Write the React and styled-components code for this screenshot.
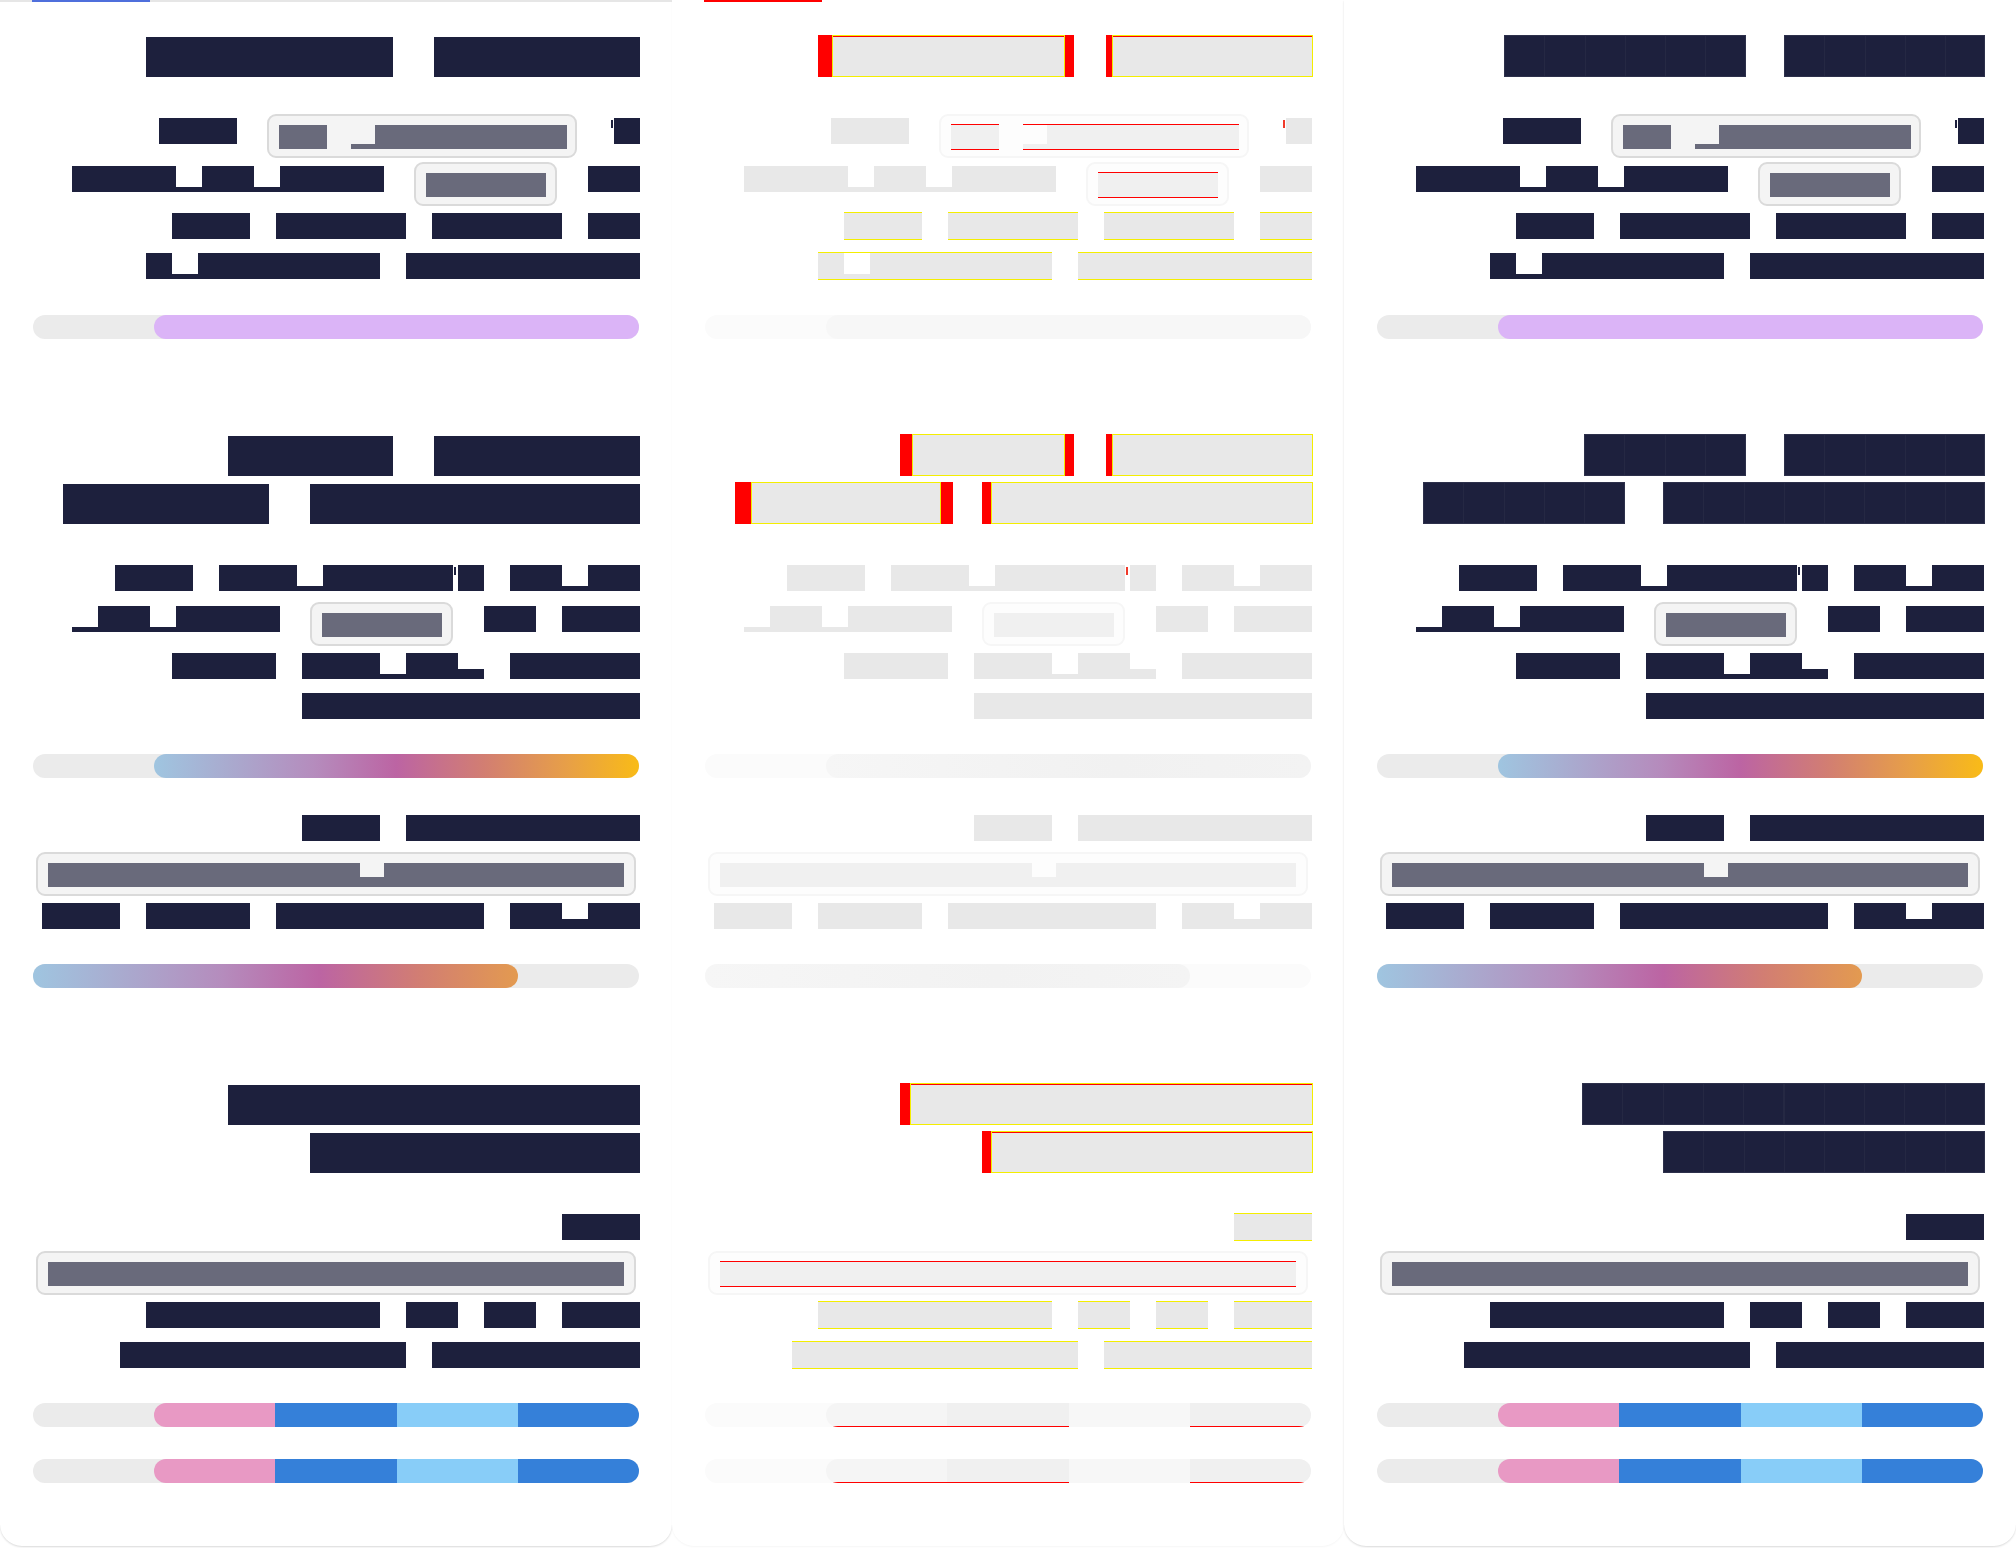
import React from 'react';
import styled, { createGlobalStyle, ThemeProvider, css, useTheme } from 'styled-components';

const YELLOW = '#f4ee00';
const RED = '#ff0000';

const GlobalStyle = createGlobalStyle`
  html, body {
    margin: 0;
    padding: 0;
    background: #fff;
  }
  body {
    font-family: "Liberation Sans", Arial, sans-serif;
  }
`;

// title metrics of the two renders being compared
const metrics = {
    base: { cw: 41.2, sw: 41.2, right: 640 },
    alt: { cw: 40.3, sw: 38, right: 641 },
};

const base = {
    metric: 'base',
    ink: '#1d203d',
    field: '#f4f4f4',
    fieldLine: '#dadada',
    fieldInk: '#696a7b',
    tick: '#1d203d',
    track: '#ebebeb',
    lavender: '#dbb4f7',
    gradA: 'linear-gradient(90deg, #9fc5e0 0%, #a9abcf 15%, #b58cbd 33%, #bc64a3 50%, #d27e72 68%, #e79f48 85%, #f9bb17 100%)',
    gradB: 'linear-gradient(90deg, #9fc5e0 0%, #a9abcf 18%, #b58cbd 39%, #bc64a3 59%, #d27e72 80%, #e39a50 100%)',
    segs: ['#e899c4', '#3580d9', '#88cdf8', '#3580d9'],
    titleH: 40,
    grid: false,
    tab: '#e6e6e6',
    tabActive: '#4f6fdc',
    shadow: '0 1px 2px rgba(0,0,0,0.15)',
};

const alt = {
    ...base,
    metric: 'alt',
    titleH: 42,
    grid: true,
    tab: 'transparent',
    tabActive: 'transparent',
};

const diff = {
    ...base,
    diff: true,
    marks: true,
    ink: '#e8e8e8',
    field: '#fdfdfd',
    fieldLine: '#f6f6f6',
    fieldInk: '#f0f0f0',
    tick: '#f03a2a',
    track: '#fbfbfb',
    lavender: '#f7f7f7',
    gradA: 'linear-gradient(90deg, #f6f6f6, #f1f1f1 60%, #f3f3f3)',
    gradB: 'linear-gradient(90deg, #f6f6f6, #f2f2f2 60%, #f4f4f4)',
    segs: ['#f5f5f5', '#f0f0f0', '#f7f7f7', '#f0f0f0'],
    tab: 'transparent',
    tabActive: RED,
    shadow: '0 1px 2px rgba(0,0,0,0.04)',
};

const content = [
    { k: 'title', p: 'xxxxxx xxxxx', mt: 33, top: true },
    { k: 'line', mt: 37, h: 48, items: [
        { t: 'text', p: 'xxx' },
        { t: 'field', w: 310, p: 'xx _xxxxxxxx', gap: 30, m: 'r' },
        { t: 'tick', gap: 34 },
        { t: 'text', p: 'x', gap: 1 },
    ] },
    { k: 'line', h: 47, items: [
        { t: 'text', p: 'xxxx_xx_xxxx' },
        { t: 'field', w: 143, p: 'xxxxx', gap: 30, m: 'r' },
        { t: 'text', p: 'xx', gap: 31 },
    ] },
    { k: 'line', h: 40, items: [{ t: 'text', p: 'xxx xxxxx xxxxx xx', m: 'y' }] },
    { k: 'line', h: 40, items: [{ t: 'text', p: 'x_xxxxxxx xxxxxxxxx', m: 'y' }] },
    { k: 'bar', mt: 26, fill: 'lavender', from: 20, size: 80 },

    { k: 'title', p: 'xxxx xxxxx', mt: 95 },
    { k: 'title', p: 'xxxxx xxxxxxxx', mt: 6 },
    { k: 'line', mt: 37, h: 40, items: [
        { t: 'text', p: 'xxx xxx_xxxxx' },
        { t: 'tick', gap: 1 },
        { t: 'text', p: 'x xx_xx', gap: 2 },
    ] },
    { k: 'line', mt: 1, h: 47, items: [
        { t: 'text', p: '_xx_xxxx' },
        { t: 'field', w: 143, p: 'xxxxx', gap: 30 },
        { t: 'text', p: 'xx xxx', gap: 31 },
    ] },
    { k: 'line', h: 40, items: [{ t: 'text', p: 'xxxx xxx_xx. xxxxx' }] },
    { k: 'line', h: 40, items: [{ t: 'text', p: 'xxxxxxxxxxxxx' }] },
    { k: 'bar', mt: 25, fill: 'gradA', from: 20, size: 80 },
    { k: 'line', mt: 33, h: 40, items: [{ t: 'text', p: 'xxx xxxxxxxxx' }] },
    { k: 'wide', mt: 1, p: 'xxxxxxxxxxxxx.xxxxxxxxxx' },
    { k: 'line', mt: 3, h: 40, items: [{ t: 'text', p: 'xxx xxxx xxxxxxxx xx.xx' }] },
    { k: 'bar', mt: 25, fill: 'gradB', from: 0, size: 80 },

    { k: 'title', p: 'xxxxxxxxxx', mt: 95, top: true },
    { k: 'title', p: 'xxxxxxxx', mt: 6, top: true },
    { k: 'line', mt: 37, h: 40, items: [{ t: 'text', p: 'xxx', m: 'y' }] },
    { k: 'wide', mt: 1, p: 'xxxxxxxxxxxxxxxxxxxxxxxx', m: 'r' },
    { k: 'line', mt: 3, h: 40, items: [{ t: 'text', p: 'xxxxxxxxx xx xx xxx', m: 'y' }] },
    { k: 'line', h: 40, items: [{ t: 'text', p: 'xxxxxxxxxxx xxxxxxxx', m: 'y' }] },
    { k: 'bar', mt: 25, fill: 'segs', from: 20, size: 80 },
    { k: 'bar', mt: 32, fill: 'segs', from: 20, size: 80 },
];

const Board = styled.main`
    display: grid;
    grid-template-columns: repeat(3, 672px);
    align-items: start;
    height: 1548px;
    overflow: hidden;
    background: #fff;
`

const Card = styled.section`
    box-sizing: border-box;
    display: flex;
    flex-direction: column;
    height: 1546px;
    padding: 0 32px 0 33px;
    background: #fff;
    border-radius: 0 0 22px 22px;
    box-shadow: ${p => p.theme.shadow};
`

const TabBar = styled.div`
    display: flex;
    flex-shrink: 0;
    height: 2px;
    margin: 0 -32px 0 -33px;
    background: ${p => p.theme.tab};
`

const TabMark = styled.div`
    width: 118px;
    margin-left: 32px;
    background: ${p => p.theme.tabActive};
`

const TitleLine = styled.div`
    display: flex;
    flex-shrink: 0;
    justify-content: flex-end;
    align-items: flex-end;
    height: 42px;
    margin-top: ${p => p.$mt}px;
    margin-right: ${p => p.$shift}px;
`

const TitleWord = styled.span`
    display: block;
    flex-shrink: 0;
    width: ${p => p.$w}px;
    height: ${p => p.theme.titleH}px;
    margin-left: ${p => p.$gap}px;
    background: ${p => p.theme.ink};
    ${p => p.theme.grid && css`
        background: repeating-linear-gradient(90deg, #252843 0 1px, ${p.theme.ink} 1px ${p.$cw}px);
        box-shadow: inset 0 0 0 1px #2d304b;
    `}
`

const DiffWord = styled.span`
    display: flex;
    flex-shrink: 0;
    width: ${p => p.$w}px;
    height: 42px;
    margin-left: ${p => p.$gap}px;
`

const Miss = styled.span`
    flex-shrink: 0;
    width: ${p => p.$w}px;
    background: ${RED};
`

const Match = styled.span`
    flex: 1;
    background: #e8e8e8;
    box-shadow: inset 0 0 0 1px ${YELLOW}${p => p.$top ? `, inset 0 2px 0 ${RED}` : ''};
`

const Line = styled.div`
    display: flex;
    flex-shrink: 0;
    justify-content: flex-end;
    align-items: flex-start;
    height: ${p => p.$h}px;
    margin-top: ${p => p.$mt || 0}px;
`

const Run = styled.span`
    display: flex;
    flex-shrink: 0;
    align-items: flex-end;
    height: ${p => p.$field ? 24 : 26}px;
    margin-top: ${p => p.$field ? 0 : 4}px;
    margin-left: ${p => p.$gap}px;
    ${p => p.$flag === 'y' && css`box-shadow: 0 -1px 0 ${YELLOW}, 0 1px 0 ${YELLOW};`}
    ${p => p.$flag === 'r' && css`box-shadow: 0 -1px 0 ${RED}, 0 1px 0 ${RED};`}
`

const Glyph = styled.span`
    display: block;
    flex-shrink: 0;
    width: ${p => p.$w}px;
    height: ${p => ({ _: '5px', '.': '10px' }[p.$k] || '100%')};
    background: ${p => p.$field ? p.theme.fieldInk : p.theme.ink};
`

const Field = styled.div`
    box-sizing: border-box;
    display: flex;
    flex-shrink: 0;
    align-items: flex-start;
    width: ${p => p.$w}px;
    height: 44px;
    margin-left: ${p => p.$gap || 0}px;
    margin-right: ${p => p.$mr || 0}px;
    padding: 9px 0 0 10px;
    border: 2px solid ${p => p.theme.fieldLine};
    border-radius: 9px;
    background: ${p => p.theme.field};
`

const Tick = styled.span`
    display: block;
    flex-shrink: 0;
    width: 2px;
    height: 8px;
    margin: 6px 0 0 ${p => p.$gap}px;
    background: ${p => p.theme.tick};
`

const Track = styled.div`
    display: flex;
    flex-shrink: 0;
    height: 24px;
    margin: ${p => p.$mt}px 1px 0 0;
    border-radius: 12px;
    background: ${p => p.theme.track};
`

const Fill = styled.div`
    display: flex;
    overflow: hidden;
    margin-left: ${p => p.$from}%;
    width: ${p => p.$size}%;
    border-radius: 12px;
    background: ${p => p.$bg};
`

const Seg = styled.div`
    flex: 1;
    background: ${p => p.$c};
    ${p => p.$under && css`box-shadow: inset 0 -1px 0 ${RED};`}
`

function wordSpans(p, m) {
    const tokens = p.match(/ +|[^ ]+/g);
    const widthOf = (t) => t.length * (t[0] === ' ' ? m.sw : m.cw);
    const total = tokens.reduce((s, t) => s + widthOf(t), 0);
    let x = m.right - total;
    const out = [];
    tokens.forEach((t) => {
        if (t[0] !== ' ') out.push({ s: x, e: x + widthOf(t) });
        x += widthOf(t);
    });
    return out;
}

function Title({ p, mt, top }) {
    const theme = useTheme();

    if (theme.diff) {
        const a = wordSpans(p, metrics.base);
        const b = wordSpans(p, metrics.alt);
        const words = a.map((wa, i) => ({
            s: Math.min(wa.s, b[i].s),
            e: Math.max(wa.e, b[i].e),
            lead: Math.abs(wa.s - b[i].s),
            tail: Math.abs(wa.e - b[i].e),
        }));
        return (
            <TitleLine $mt={mt} $shift={640 - words[words.length - 1].e}>
                {words.map((w, i) => (
                    <DiffWord key={i} $w={w.e - w.s} $gap={i ? w.s - words[i - 1].e : 0}>
                        <Miss $w={w.lead} />
                        <Match $top={top} />
                        {w.tail > 2 && <Miss $w={w.tail} />}
                    </DiffWord>
                ))}
            </TitleLine>
        );
    }

    const m = metrics[theme.metric];
    const words = wordSpans(p, m);
    return (
        <TitleLine $mt={mt} $shift={640 - m.right}>
            {words.map((w, i) => (
                <TitleWord key={i} $w={w.e - w.s} $gap={i ? w.s - words[i - 1].e : 0} $cw={m.cw} />
            ))}
        </TitleLine>
    );
}

function Text({ p, cw = 26, gap = 0, flag, field }) {
    const theme = useTheme();
    const words = p.match(/ +|[^ ]+/g);
    let pending = gap;
    const out = [];
    words.forEach((w, i) => {
        if (w[0] === ' ') {
            pending += w.length * cw;
            return;
        }
        out.push(
            <Run key={i} $gap={pending} $field={field} $flag={theme.marks ? flag : undefined}>
                {w.match(/x+|[^x]/g).map((g, j) => (
                    <Glyph key={j} $k={g[0]} $w={g.length * cw} $field={field} />
                ))}
            </Run>
        );
        pending = 0;
    });
    return out;
}

function Item({ item }) {
    if (item.t === 'tick') return <Tick $gap={item.gap} />;
    if (item.t === 'field') {
        return (
            <Field $w={item.w} $gap={item.gap}>
                <Text p={item.p} cw={24} field flag={item.m} />
            </Field>
        );
    }
    return <Text p={item.p} gap={item.gap} flag={item.m} />;
}

function Bar({ mt, fill, from, size }) {
    const theme = useTheme();
    const segs = fill === 'segs';
    return (
        <Track $mt={mt}>
            <Fill $from={from} $size={size} $bg={segs ? 'none' : theme[fill]}>
                {segs && theme.segs.map((c, i) => (
                    <Seg key={i} $c={c} $under={theme.marks && i !== 2} />
                ))}
            </Fill>
        </Track>
    );
}

function Rows() {
    return content.map((row, i) => {
        if (row.k === 'title') return <Title key={i} p={row.p} mt={row.mt} top={row.top} />;
        if (row.k === 'bar') return <Bar key={i} {...row} />;
        if (row.k === 'wide') {
            return (
                <Line key={i} $mt={row.mt} $h={44}>
                    <Field $w={600} $mr={4}>
                        <Text p={row.p} cw={24} field flag={row.m} />
                    </Field>
                </Line>
            );
        }
        return (
            <Line key={i} $mt={row.mt} $h={row.h}>
                {row.items.map((item, j) => <Item key={j} item={item} />)}
            </Line>
        );
    });
}

export default function App() {
    return (
        <>
            <GlobalStyle />
            <Board>
                {[base, diff, alt].map((theme, i) => (
                    <ThemeProvider theme={theme} key={i}>
                        <Card>
                            <TabBar><TabMark /></TabBar>
                            <Rows />
                        </Card>
                    </ThemeProvider>
                ))}
            </Board>
        </>
    );
}
